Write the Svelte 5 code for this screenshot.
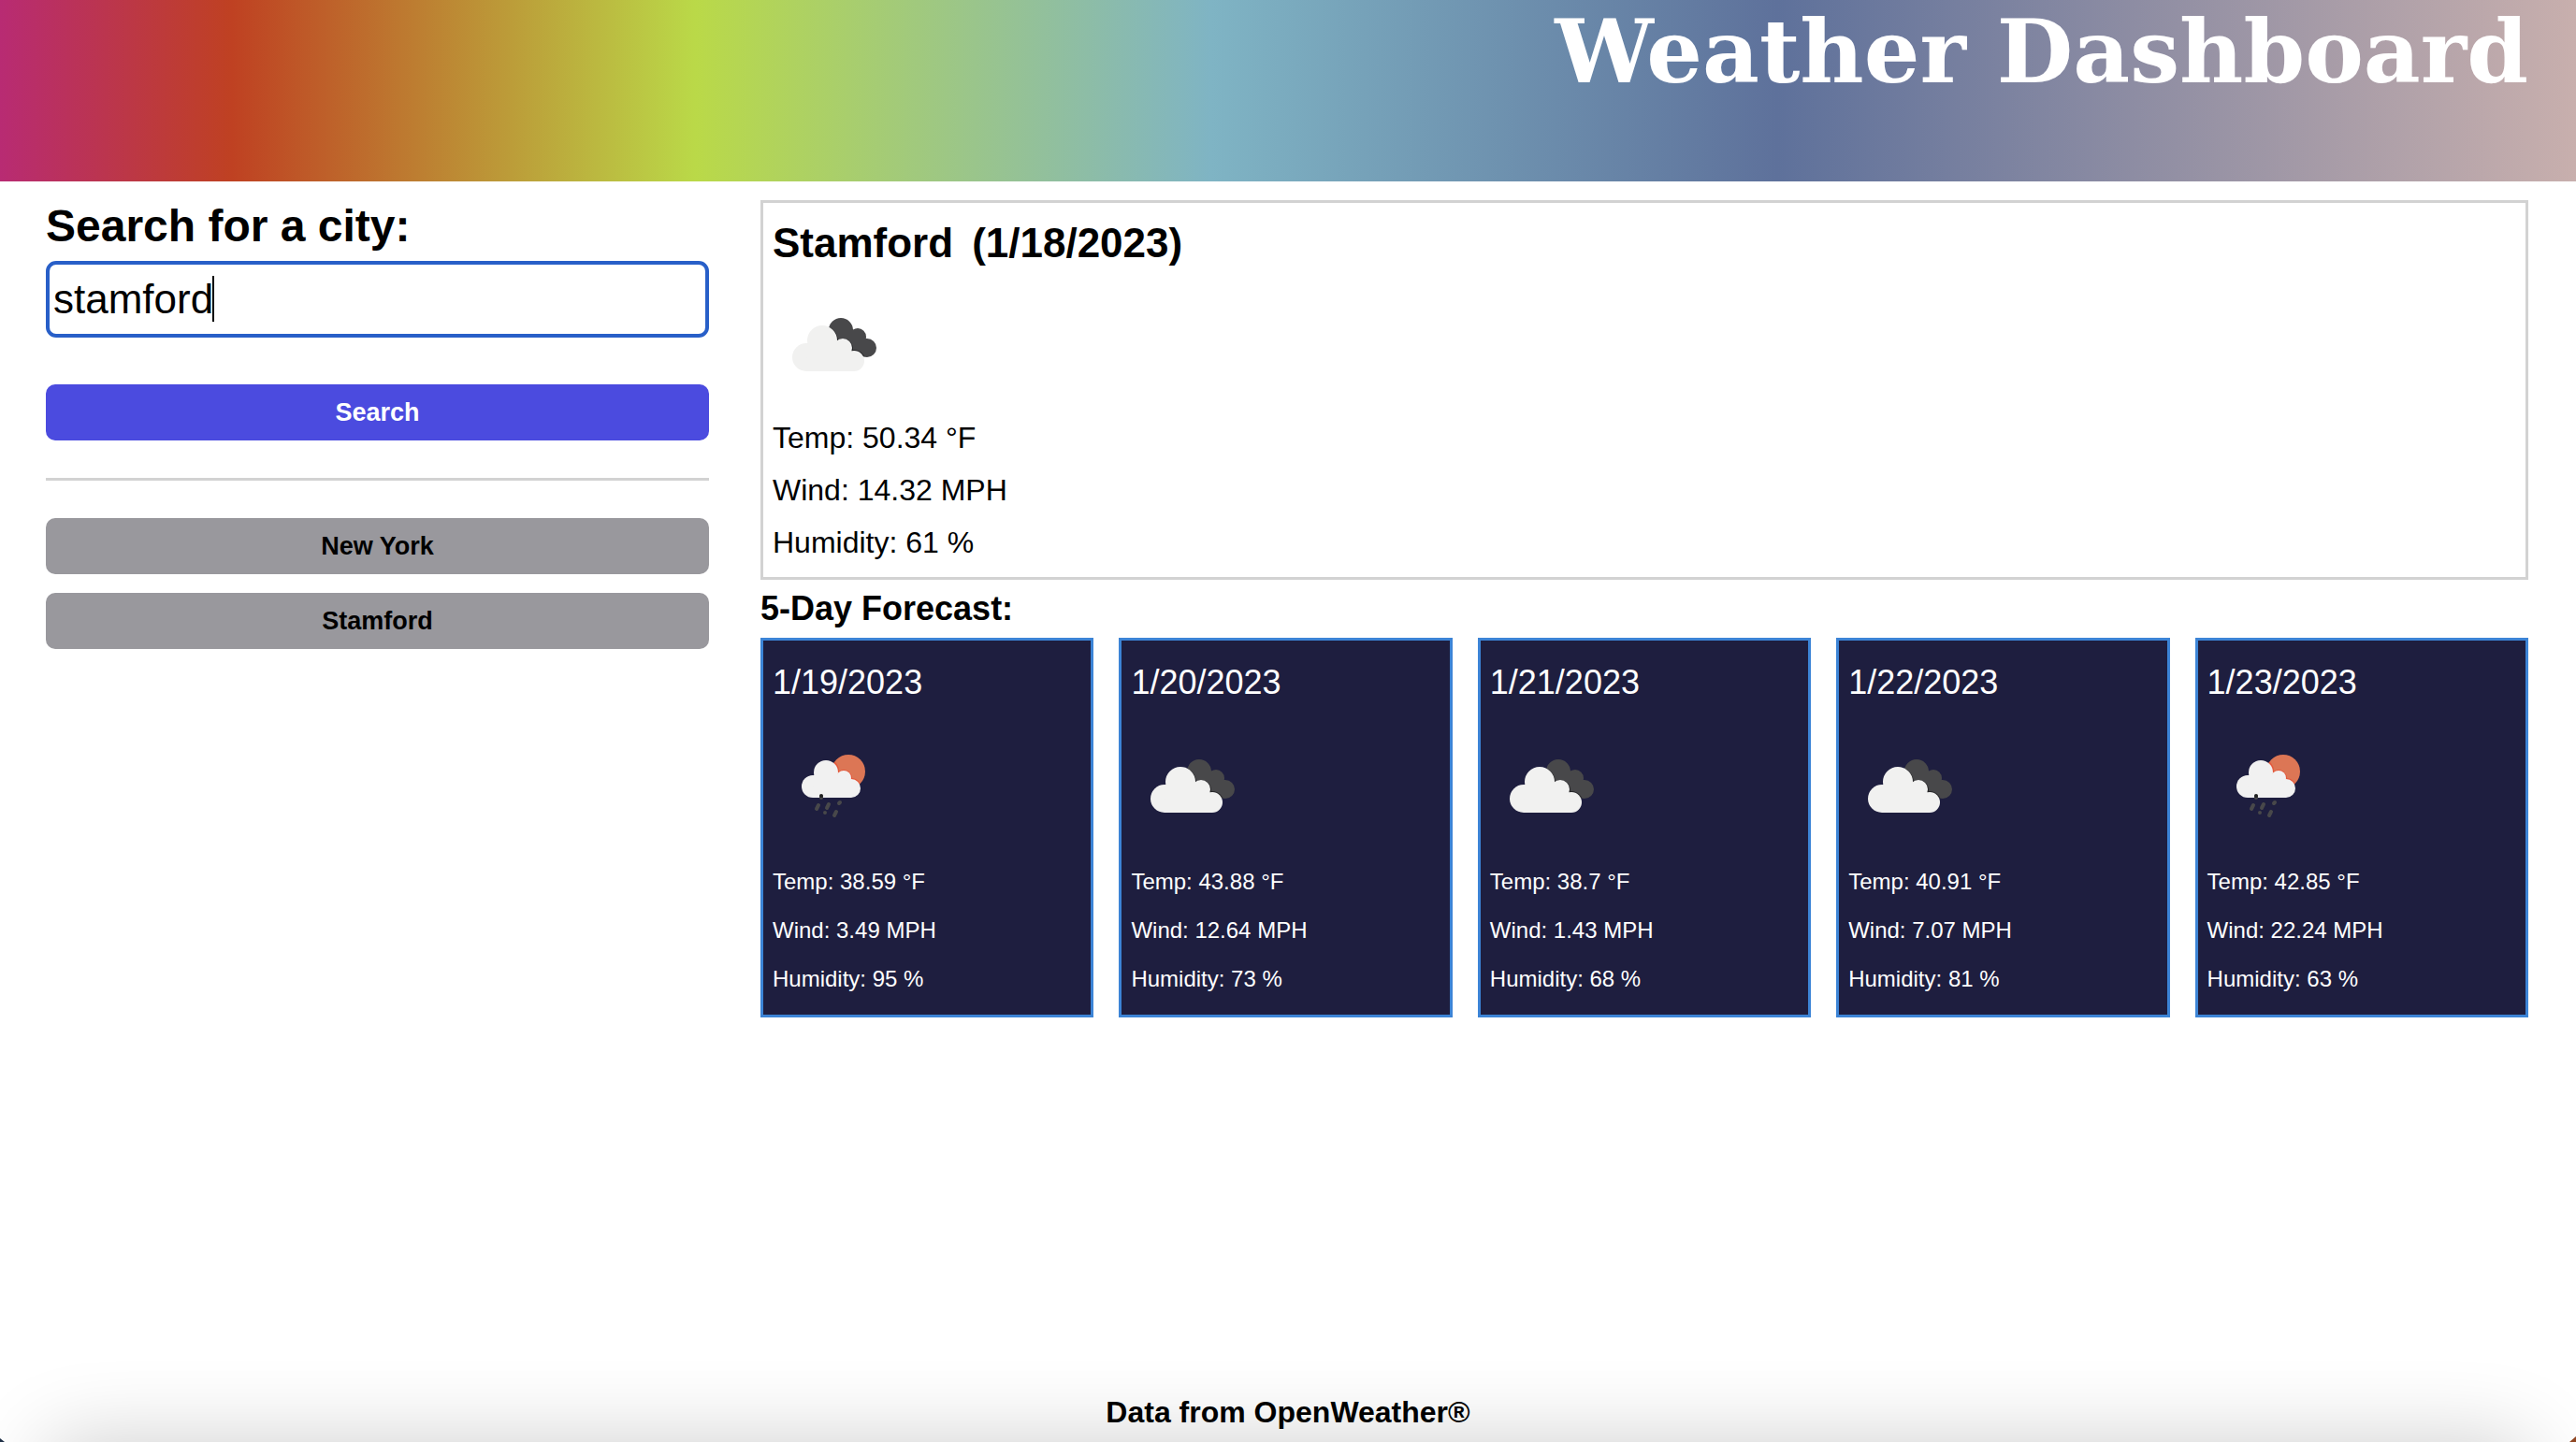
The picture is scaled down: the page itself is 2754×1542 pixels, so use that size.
<script>
  let city = $state('stamford');

  const history = ['New York', 'Stamford'];
  const current = { city: 'Stamford', date: '(1/18/2023)', temp: '50.34', wind: '14.32', humidity: '61' };
  const forecast = [
    { date: '1/19/2023', icon: 'rain', temp: '38.59', wind: '3.49', humidity: '95' },
    { date: '1/20/2023', icon: 'clouds', temp: '43.88', wind: '12.64', humidity: '73' },
    { date: '1/21/2023', icon: 'clouds', temp: '38.7', wind: '1.43', humidity: '68' },
    { date: '1/22/2023', icon: 'clouds', temp: '40.91', wind: '7.07', humidity: '81' },
    { date: '1/23/2023', icon: 'rain', temp: '42.85', wind: '22.24', humidity: '63' }
  ];
</script>

{#snippet weatherIcon(kind)}
  {#if kind === 'rain'}
    <svg class="icon" viewBox="0 0 132 132" role="img" aria-label="Rain">
      <clipPath id="sun"><circle cx="81" cy="46" r="18" /></clipPath>
      <circle cx="81" cy="46" r="18" fill="#dc7655" />
      <g clip-path="url(#sun)" fill="#e4573a">
        <circle cx="57" cy="46" r="14" /><circle cx="76" cy="53" r="9" /><circle cx="84" cy="64" r="11" />
      </g>
      <g fill="#f1f1f1">
        <circle cx="57" cy="47" r="13" />
        <circle cx="43" cy="62" r="12" />
        <circle cx="76" cy="53" r="8" />
        <circle cx="84" cy="64" r="10" />
        <path d="M44 50h26l14 11v13H43z" />
      </g>
      <path d="M49 82l-2 4M60 81l-2 4M72 79l-1 1M56 90v.1M68 89l-2 4M52 73v1" fill="none" stroke="#48484a" stroke-width="4" stroke-linecap="round" />
      <circle cx="52" cy="72" r="2" fill="#222" />
    </svg>
  {:else}
    <svg class="icon" viewBox="0 0 132 132" role="img" aria-label="Clouds">
      <clipPath id="backCloud">
        <circle cx="73" cy="46" r="13" />
        <circle cx="91" cy="53" r="9" />
        <circle cx="101" cy="65" r="10" />
        <path d="M66 46h20l14 12v16H76z" />
      </clipPath>
      <g clip-path="url(#backCloud)">
        <path d="M50 20h70v70H50z" fill="#48484a" />
        <g fill="#262628">
          <circle cx="53" cy="58" r="17" /><circle cx="75" cy="66" r="11" /><circle cx="87" cy="79" r="12" />
        </g>
      </g>
      <g fill="#f1f1f0">
        <circle cx="53" cy="57" r="16" />
        <circle cx="36" cy="75" r="15" />
        <circle cx="75" cy="65" r="10" />
        <circle cx="87" cy="79" r="11" />
        <path d="M37 60h32l18 10v20H36z" />
      </g>
    </svg>
  {/if}
{/snippet}

<div class="page">
  <header><h1>Weather Dashboard</h1></header>

  <main>
    <aside>
      <form onsubmit={(e) => e.preventDefault()}>
        <label for="city">Search for a city:</label>
        <div class="field">
          <input id="city" type="text" bind:value={city} autocomplete="off" spellcheck="false" />
          <span class="mirror" aria-hidden="true">{city}</span>
        </div>
        <button class="search" type="submit">Search</button>
      </form>
      <hr />
      <div class="history">
        {#each history as name}
          <button type="button">{name}</button>
        {/each}
      </div>
    </aside>

    <div class="results">
      <section class="today">
        <h2><span>{current.city}</span><span>{current.date}</span></h2>
        {@render weatherIcon('clouds')}
        <p>Temp: {current.temp} °F</p>
        <p>Wind: {current.wind} MPH</p>
        <p>Humidity: {current.humidity} %</p>
      </section>

      <h3>5-Day Forecast:</h3>
      <section class="forecast">
        {#each forecast as day}
          <article>
            <h4>{day.date}</h4>
            {@render weatherIcon(day.icon)}
            <p>Temp: {day.temp} °F</p>
            <p>Wind: {day.wind} MPH</p>
            <p>Humidity: {day.humidity} %</p>
          </article>
        {/each}
      </section>
    </div>
  </main>

  <footer>Data from OpenWeather®</footer>
</div>

<style>
  :global(body) {
    background: linear-gradient(90deg, #1e2f45 50%, #8f4622 50%);
  }
  .page {
    position: relative;
    display: flex;
    flex-direction: column;
    min-height: 100vh;
    overflow: hidden;
    background: #fff;
    color: #000;
    font-family: 'Liberation Sans', Arial, sans-serif;
    /* Trims the two bottom corners. */
    clip-path: polygon(0 0, 100% 0, 100% calc(100% - 6px), calc(100% - 7px) 100%, 5px 100%, 0 calc(100% - 4px));
  }
  h1, h2, h3, h4, p {
    margin: 0;
  }
  header {
    height: 194px;
    padding: 0 51px;
    background: linear-gradient(90deg, #b82b73 0%, #bf4122 9%, #bad948 27%, #7fb4c4 47%, #5e719b 69%, #c8afad 100%);
    text-align: right;
  }
  h1 {
    color: #fff;
    font: bold 94px/110px Georgia, 'DejaVu Serif', serif;
  }
  main {
    display: grid;
    grid-template-columns: 709fr 1890fr;
    gap: 55px;
    padding: 20px 51px 0 49px;
  }
  label {
    display: block;
    font-size: 48px;
    font-weight: bold;
    line-height: 56px;
    padding-bottom: 9px;
  }
  .field {
    position: relative;
    margin-bottom: 50px;
  }
  input {
    display: block;
    box-sizing: border-box;
    width: 100%;
    height: 82px;
    padding: 0 4px;
    border: 4px solid #285fc8;
    border-radius: 11px;
    outline: none;
    background: #fff;
    color: #000;
    caret-color: transparent;
    font: 44px 'Liberation Sans', Arial, sans-serif;
  }
  /* Invisible copy of the value; its right edge is the text cursor. */
  .mirror {
    position: absolute;
    top: 16px;
    left: 7px;
    height: 49px;
    border-right: 2px solid #000;
    color: transparent;
    font-size: 44px;
    line-height: 49px;
    pointer-events: none;
  }
  button {
    display: block;
    width: 100%;
    height: 60px;
    padding: 0;
    border: 0;
    border-radius: 10px;
    background: #99989d;
    color: #000;
    font: bold 27px 'Liberation Sans', Arial, sans-serif;
  }
  .search {
    background: #4b4bdf;
    color: #fff;
  }
  hr {
    height: 3px;
    margin: 40px 0;
    border: 0;
    background: #d2d2d2;
  }
  .history {
    display: grid;
    gap: 20px;
  }
  .today {
    padding: 13px 10px 9px;
    border: 3px solid #d2d2d2;
  }
  h2 {
    display: flex;
    gap: 20px;
    font-size: 44px;
    line-height: 60px;
  }
  .icon {
    display: block;
    width: 132px;
    height: 132px;
  }
  .today p {
    font-size: 32px;
    line-height: 56px;
  }
  .today .icon {
    margin: 17px 0 1px;
  }
  h3 {
    font-size: 36px;
    line-height: 62px;
  }
  .forecast {
    display: grid;
    grid-template-columns: repeat(5, 1fr);
    gap: 27px;
  }
  article {
    padding: 15px 10px 12px;
    border: 3px solid #3c84d6;
    background: #1e1e3f;
    color: #fff;
  }
  h4 {
    font-size: 36px;
    font-weight: normal;
    line-height: 60px;
  }
  article .icon {
    margin: 19px 0 6px;
  }
  article p {
    font-size: 24px;
    line-height: 52px;
  }
  footer {
    margin-top: auto;
    padding-bottom: 12px;
    font-size: 32px;
    font-weight: bold;
    line-height: 40px;
    text-align: center;
    z-index: 1;
  }
  /* Soft shade rising from the bottom edge of the page. */
  .page::after {
    content: '';
    position: absolute;
    top: 100%;
    right: 50px;
    left: 50px;
    height: 100px;
    border-radius: 20px;
    box-shadow: 0 0 90px rgba(0, 0, 0, 0.2);
  }
</style>
